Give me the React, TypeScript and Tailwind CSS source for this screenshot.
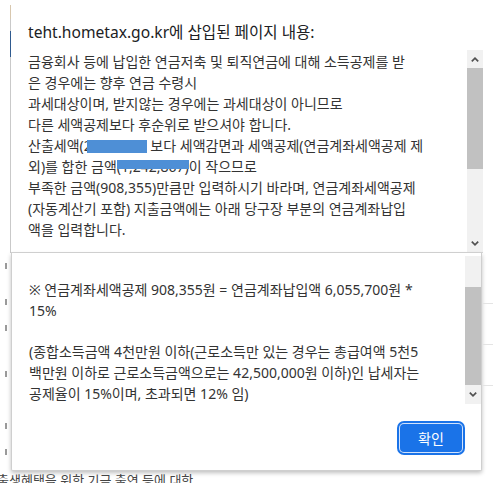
import React from 'react';

const Chevron = ({ up }: { up?: boolean }) => (
  <svg width="8" height="5" viewBox="0 0 8 5">
    <path
      d={up ? 'M0.8 4.4L4 1.2L7.2 4.4' : 'M0.8 0.6L4 3.8L7.2 0.6'}
      fill="none"
      stroke="#505050"
      strokeWidth="1.7"
    />
  </svg>
);

const topLines = [
  '금융회사 등에 납입한 연금저축 및 퇴직연금에 대해 소득공제를 받',
  '은 경우에는 향후 연금 수령시',
  '과세대상이며, 받지않는 경우에는 과세대상이 아니므로',
  '다른 세액공제보다 후순위로 받으셔야 합니다.',
];

const App = () => {
  return (
    <div className="w-[493px] h-[483px] bg-white overflow-hidden text-[#333] font-['Noto_Sans','Noto_Sans_CJK_KR',sans-serif]">
      {/* first capture: top of the dialog */}
      <div className="h-[253px] flex">
        <div className="w-[10px]" />
        <div className="w-px flex flex-col bg-[#c9c9c9]">
          <div className="h-[5px] bg-white" />
          <div className="h-[14px] bg-[#d8c7ae]" />
          <div className="h-[12px]" />
          <div className="h-[26px] bg-[#2f5a8f]" />
        </div>
        <div className="flex-1 flex flex-col border-b border-[#d6d6d6]">
          <div className="h-[50px] pt-[21px] pl-[17px] text-[15.6px] leading-[22px] text-[#202124] whitespace-pre">
            teht.hometax.go.kr에 삽입된 페이지 내용:
          </div>
          <div className="flex flex-1">
            <div className="flex-1 pl-[17px] pt-px text-[14px] leading-[21px]">
              {topLines.map((l) => (
                <div key={l} className="whitespace-pre">{l}</div>
              ))}
              <div className="whitespace-pre">
                산출세액(2
                <span className="inline-block w-[60px] h-[13px] -ml-[5px] align-[-2px] bg-[#4e8fd6]" />
                {' 보다 세액감면과 세액공제(연금계좌세액공제 제'}
              </div>
              <div className="whitespace-pre">
                외)를 합한 금액
                <span className="relative">
                  (1,242,867)
                  <span className="absolute left-0 right-0 top-[3px] h-[9px] bg-[#4e8fd6]" />
                </span>
                이 작으므로
              </div>
              <div className="whitespace-pre">부족한 금액(908,355)만큼만 입력하시기 바라며, 연금계좌세액공제</div>
              <div className="whitespace-pre">(자동계산기 포함) 지출금액에는 아래 당구장 부분의 연금계좌납입</div>
              <div className="whitespace-pre">액을 입력합니다.</div>
            </div>
            <div className="w-[16px] flex flex-col bg-[#f1f1f1]">
              <div className="h-[18px] flex items-center justify-center">
                <Chevron up />
              </div>
              <div className="h-[101px] bg-[#c1c1c1]" />
              <div className="flex-1" />
              <div className="h-[17px] flex items-center justify-center">
                <Chevron />
              </div>
            </div>
          </div>
        </div>
        <div className="w-[10px]" />
      </div>

      {/* second capture: bottom of the dialog over the page */}
      <div className="h-[218px] flex">
        <div className="w-[11px] flex flex-col items-center">
          <div className="mt-[10px] w-[2px] h-[6px] bg-[#9a9a9a]" />
          <div className="mt-[30px] w-[2px] h-[6px] bg-[#9a9a9a]" />
          <div className="mt-[20px] w-[2px] h-[6px] bg-[#9a9a9a]" />
          <div className="mt-[40px] w-[2px] h-[6px] bg-[#9a9a9a]" />
          <div className="mt-[46px] w-[2px] h-[6px] bg-[#9a9a9a]" />
          <div className="mt-[20px] w-[2px] h-[6px] bg-[#9a9a9a]" />
        </div>
        <div className="w-[471px] flex flex-col border-x border-[#cfcfcf] border-b rounded-b-[2px] shadow-[0_2px_4px_rgba(0,0,0,0.25)] bg-white">
          <div className="h-[151px] flex">
            <div className="flex-1 pl-[17px] pt-[27px] text-[14px] leading-[20.7px]">
              <div className="whitespace-pre">※ 연금계좌세액공제 908,355원 = 연금계좌납입액 6,055,700원 *</div>
              <div className="whitespace-pre">15%</div>
              <div className="h-[20.7px]" />
              <div className="whitespace-pre">(종합소득금액 4천만원 이하(근로소득만 있는 경우는 총급여액 5천5</div>
              <div className="whitespace-pre">백만원 이하로 근로소득금액으로는 42,500,000원 이하)인 납세자는</div>
              <div className="whitespace-pre">공제율이 15%이며, 초과되면 12% 임)</div>
            </div>
            <div className="w-[16px] mt-[3px] flex flex-col bg-[#f1f1f1]">
              <div className="h-[31px]" />
              <div className="h-[98px] bg-[#c1c1c1]" />
              <div className="flex-1 flex items-center justify-center">
                <Chevron />
              </div>
            </div>
          </div>
          <div className="flex justify-end pt-[20px] pr-[19px]">
            <button className="w-[62px] h-[28px] rounded-[4px] bg-[#1a73e8] text-white text-[14px] ring-2 ring-[#1a73e8] ring-offset-1 ring-offset-[#d2e3fc]">
              확인
            </button>
          </div>
        </div>
        <div className="flex-1 flex flex-col">
          <div className="mt-[50px] h-px bg-[#e4e4e4]" />
          <div className="mt-[40px] h-px bg-[#e4e4e4]" />
          <div className="mt-[40px] h-px bg-[#e4e4e4]" />
        </div>
      </div>
      <div className="indent-[-3px] pt-[1px] text-[13px] leading-[16px] text-[#444] whitespace-pre">
        출생혜택을 위한 기금 출연 등에 대한
      </div>
    </div>
  );
};

export default App;
